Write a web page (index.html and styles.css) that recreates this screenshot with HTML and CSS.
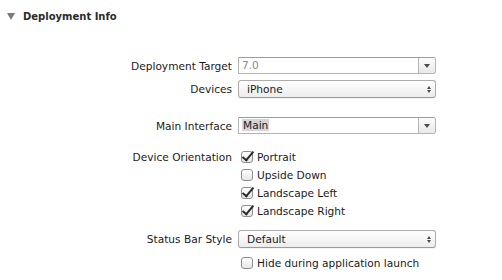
FILE: index.html
```html
<!DOCTYPE html>
<html lang="en">
<head>
  <meta charset="UTF-8" />
  <title>Deployment Info</title>
  <link rel="stylesheet" href="styles.css">
</head>
<body>
  <div class="section-head">
    <span class="disclosure"></span>
    <span>Deployment Info</span>
  </div>

  <div class="form">
    <div class="row">
      <label>Deployment Target</label>
      <div class="combo">
        <span class="combo-text dim">7.0</span>
        <span class="combo-btn"><i class="down"></i></span>
      </div>
    </div>
    <div class="row">
      <label>Devices</label>
      <div class="popup">
        <span>iPhone</span>
        <span class="updown"><i class="up"></i><i class="down"></i></span>
      </div>
    </div>

    <div class="row spaced">
      <label>Main Interface</label>
      <div class="combo">
        <span class="combo-text"><span class="selected">Main</span></span>
        <span class="combo-btn"><i class="down"></i></span>
      </div>
    </div>

    <div class="row checks">
      <label>Device Orientation</label>
      <div class="check-list">
        <div class="check on"><span class="box"></span>Portrait</div>
        <div class="check"><span class="box"></span>Upside Down</div>
        <div class="check on"><span class="box"></span>Landscape Left</div>
        <div class="check on"><span class="box"></span>Landscape Right</div>
      </div>
    </div>

    <div class="row status">
      <label>Status Bar Style</label>
      <div class="popup">
        <span>Default</span>
        <span class="updown"><i class="up"></i><i class="down"></i></span>
      </div>
    </div>
    <div class="row">
      <label></label>
      <div class="check"><span class="box"></span>Hide during application launch</div>
    </div>
  </div>
</body>
</html>
```

FILE: styles.css
```css
* { box-sizing: border-box; }
body {
  margin: 0;
  background: #ffffff;
  color: #1a1a1a;
  font-family: "DejaVu Sans", sans-serif;
  font-size: 10.6px;
}

.section-head {
  display: flex;
  align-items: center;
  gap: 8px;
  height: 32px;
  padding-left: 7px;
  font-weight: bold;
  font-size: 10px;
  color: #2b2b2b;
}

.disclosure {
  width: 0;
  height: 0;
  border-left: 4px solid transparent;
  border-right: 4px solid transparent;
  border-top: 7px solid #7a7a7a;
}

.form {
  display: flex;
  flex-direction: column;
  gap: 6px;
  padding-top: 25px;
}

.row {
  display: flex;
  align-items: center;
  gap: 6px;
  min-height: 17px;
}

.row label {
  width: 232px;
  text-align: right;
  flex-shrink: 0;
}

.row.spaced { margin-top: 13px; }
.row.checks { margin-top: 8px; align-items: flex-start; }
.row.checks label { line-height: 18px; }
.row.status { margin-top: 4px; }

.combo {
  display: flex;
  width: 198px;
  height: 17px;
  border: 1px solid #b4b4b4;
  border-top-color: #9c9c9c;
  border-radius: 0 3px 3px 0;
  background: #fff;
}

.combo-text {
  flex: 1;
  padding-left: 3px;
  line-height: 15px;
}

.combo-text.dim { color: #8a8a8a; }

.selected {
  background: #d6d6d6;
  padding: 0 1px;
}

.combo-btn {
  width: 17px;
  border-left: 1px solid #b4b4b4;
  border-radius: 0 3px 3px 0;
  background: linear-gradient(#fbfbfb, #e9e9e9);
  display: flex;
  align-items: center;
  justify-content: center;
}

.down, .up {
  display: block;
  width: 0;
  height: 0;
  border-left: 3px solid transparent;
  border-right: 3px solid transparent;
}

.down { border-top: 4px solid #4a4a4a; }
.up { border-bottom: 4px solid #4a4a4a; }

.popup {
  display: flex;
  align-items: center;
  justify-content: space-between;
  width: 198px;
  height: 18px;
  padding: 0 4px 0 8px;
  border: 1px solid #acacac;
  border-bottom-color: #9a9a9a;
  border-radius: 3px;
  background: linear-gradient(#ffffff, #ececec);
  box-shadow: 0 1px 0 rgba(0,0,0,0.04);
}

.updown {
  display: flex;
  flex-direction: column;
  gap: 1px;
}

.updown .up, .updown .down {
  border-left-width: 2px;
  border-right-width: 2px;
}
.updown .up { border-bottom-width: 3px; }
.updown .down { border-top-width: 3px; }

.check-list {
  display: flex;
  flex-direction: column;
}

.check {
  display: flex;
  align-items: center;
  gap: 4px;
  height: 18px;
  padding-left: 3px;
}

.box {
  position: relative;
  width: 12px;
  height: 12px;
  border: 1px solid #8e8e8e;
  border-radius: 3px;
  background: linear-gradient(#ffffff, #e6e6e6);
}

.check.on .box::after {
  content: "";
  position: absolute;
  left: 3px;
  top: -3px;
  width: 4px;
  height: 10px;
  border-right: 2px solid #2a2a2a;
  border-bottom: 2px solid #2a2a2a;
  transform: rotate(40deg);
}
```
